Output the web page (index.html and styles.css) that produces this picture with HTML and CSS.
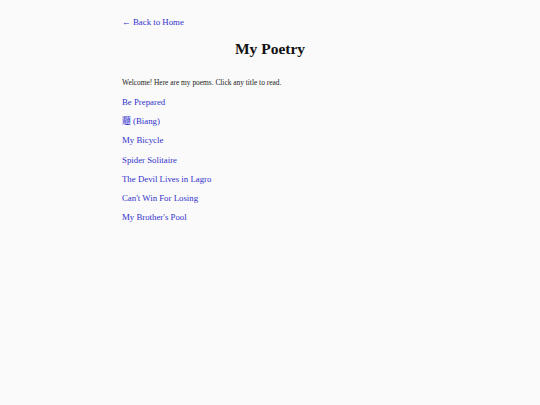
FILE: index.html
```html
<!DOCTYPE html>
<html lang="en">
<head>
<meta charset="utf-8">
<title>My Poetry</title>
<link rel="stylesheet" href="styles.css">
</head>
<body>
<main class="page">
  <a class="back" href="#">← Back to Home</a>
  <h1 class="title">My Poetry</h1>
  <p class="intro">Welcome! Here are my poems. Click any title to read.</p>
  <ul class="poems">
    <li><a href="#">Be Prepared</a></li>
    <li><a href="#">𰻝 (Biang)</a></li>
    <li><a href="#">My Bicycle</a></li>
    <li><a href="#">Spider Solitaire</a></li>
    <li><a href="#">The Devil Lives in Lagro</a></li>
    <li><a href="#">Can't Win For Losing</a></li>
    <li><a href="#">My Brother's Pool</a></li>
  </ul>
</main>
</body>
</html>
```
FILE: styles.css
```css
html, body {
  margin: 0;
  padding: 0;
  background: #fafafa;
}
body {
  font-family: "Liberation Serif", "Noto Sans CJK SC", serif;
  color: #222;
}
.page {
  width: 296px;
  margin: 0 auto;
  padding-top: 17px;
}
a {
  color: #3333cc;
  text-decoration: none;
}
.back {
  display: block;
  font-size: 8.8px;
  line-height: 11px;
}
.title {
  margin: 12px 0 0;
  text-align: center;
  font-size: 15.5px;
  line-height: 18px;
  font-weight: bold;
  color: #111;
}
.intro {
  margin: 20px 0 0;
  font-size: 7.4px;
  line-height: 10px;
}
.poems {
  list-style: none;
  margin: 9px 0 0;
  padding: 0;
  display: flex;
  flex-direction: column;
  gap: 8.2px;
}
.poems li {
  font-size: 8.8px;
  line-height: 11px;
}
```
